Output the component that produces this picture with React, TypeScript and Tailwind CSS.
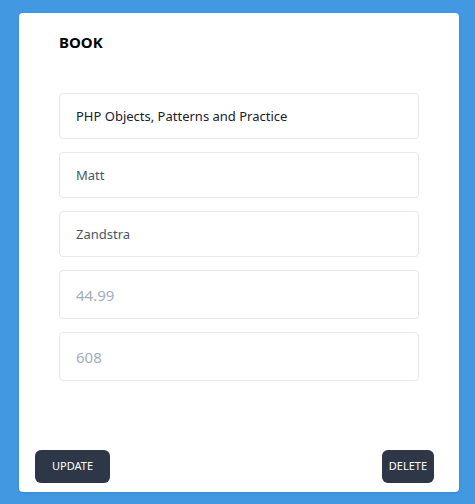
export default function App() {
  const font = { fontFamily: '"Noto Sans", "Open Sans", sans-serif' }
  return (
    <div className="min-h-screen w-full bg-[#4299e1] pl-[19px] pr-[16px] pt-[13px] pb-[12px]" style={font}>
      <div className="flex h-[479px] w-[440px] flex-col rounded bg-white shadow">
        <div className="px-10 pt-[17px]">
          <h1 className="text-[15px] font-bold leading-6 text-black">BOOK</h1>

          <div className="mt-[39px] space-y-[13px]">
            <input
              className="block h-[46px] w-full rounded border border-gray-200 px-4 text-[13px] text-[#1a202c] outline-none"
              defaultValue="PHP Objects, Patterns and Practice"
            />
            <input
              className="block h-[46px] w-full rounded border border-gray-200 px-4 text-[13px] text-[#4a5568] outline-none"
              defaultValue="Matt"
            />
            <input
              className="block h-[46px] w-full rounded border border-gray-200 px-4 text-[13px] text-[#4a5568] outline-none"
              defaultValue="Zandstra"
            />
            <input
              className="block h-[49px] w-full rounded border border-gray-200 px-4 text-[15px] outline-none placeholder:text-[#a0aec0]"
              placeholder="44.99"
            />
            <input
              className="block h-[49px] w-full rounded border border-gray-200 px-4 text-[15px] outline-none placeholder:text-[#a0aec0]"
              placeholder="608"
            />
          </div>
        </div>

        <div className="mt-auto flex items-center justify-between pb-[9px] pl-4 pr-[25px]">
          <button className="h-[33px] rounded-md bg-[#2d3748] px-[17px] text-[11px] text-white">UPDATE</button>
          <button className="h-[33px] rounded-md bg-[#2d3748] px-[7px] text-[11px] text-white">DELETE</button>
        </div>
      </div>
    </div>
  )
}
